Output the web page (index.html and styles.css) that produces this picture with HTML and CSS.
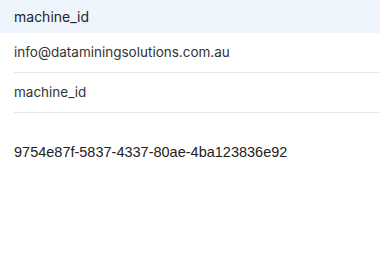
FILE: index.html
```html
<!DOCTYPE html>
<html>
<head>
<meta charset="utf-8">
<link rel="stylesheet" href="styles.css">
</head>
<body>
<div class="table">
  <div class="head">machine_id</div>
  <div class="row">info@dataminingsolutions.com.au</div>
  <div class="row">machine_id</div>
</div>
<div class="uuid">9754e87f-5837-4337-80ae-4ba123836e92</div>
</body>
</html>
```
FILE: styles.css
```css
html, body { margin: 0; padding: 0; background: #fff; }
body { font-family: Inter, "Noto Sans", sans-serif; }
.table { display: flex; flex-direction: column; }
.head {
  height: 33px;
  background: #eff5fc;
  color: #1f2328;
  font-size: 14px;
  line-height: 33px;
  padding-left: 14px;
  box-sizing: border-box;
}
.row {
  height: 40px;
  line-height: 39px;
  margin-left: 14px;
  border-bottom: 1px solid #e8e8e8;
  color: #333;
  font-size: 13.5px;
  box-sizing: border-box;
}
.uuid {
  padding: 31px 0 0 14px;
  font-family: "Liberation Sans", Arial, sans-serif;
  font-size: 14.5px;
  line-height: 16px;
  color: #222;
}
```
